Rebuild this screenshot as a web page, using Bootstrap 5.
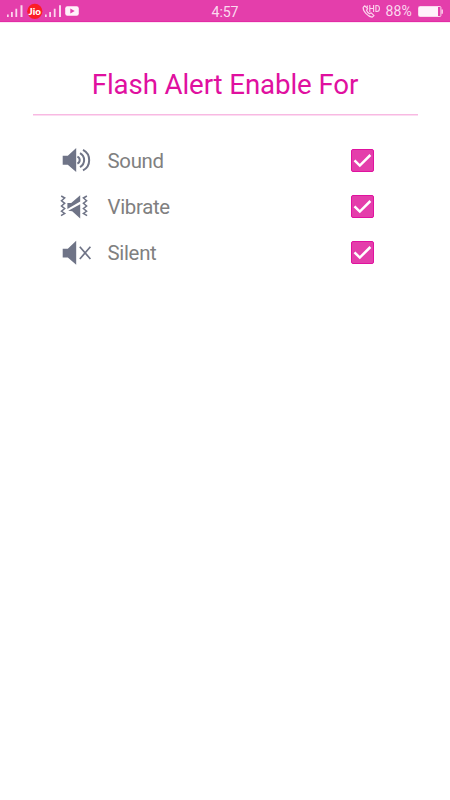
<!DOCTYPE html>
<html lang="en">
<head>
<meta charset="utf-8">
<meta name="viewport" content="width=device-width, initial-scale=1">
<title>Flash Alert</title>
<link href="https://cdn.jsdelivr.net/npm/bootstrap@5.3.0/dist/css/bootstrap.min.css" rel="stylesheet">
<style>
body{font-family:Roboto,"Liberation Sans",sans-serif;background:#fff;overflow:hidden}
.statusbar{height:22px;background:#e43eab;border-bottom:1px solid #e32ba5;color:#fbd9ef;font-size:14px;line-height:22px;box-shadow:0 1px 0 #fce4f4}
.statusbar svg{display:block}
.side{flex:1 1 0}
.clock{font-size:14.2px;padding-top:2px;letter-spacing:-.1px}
.battery-text{font-size:14px;letter-spacing:.2px;margin-right:5px;padding-top:1px}
.panel{margin:0 32px;padding-top:43px}
.title{color:#e0109f;font-size:27.7px;line-height:40px;letter-spacing:-.12px;font-weight:400}
.rule{height:2px;margin:9px 0 0 1px;background:linear-gradient(#f8b9e2 50%,#fcdcf1 50%)}
.options{padding:21px 44px 0 27px}
.option{height:46.4px;color:#808080;font-size:20.4px}
.option .form-check-input{width:23px;height:23px;border-radius:2px;border:1px solid #e0129f}
.option .form-check-input:checked{background-color:#e43eab;border-color:#e0129f;background-image:none}
.option .form-check-input:focus{box-shadow:none}
.box svg{position:absolute;inset:0;pointer-events:none}
.name{margin-left:15.5px;line-height:46px;letter-spacing:-.3px;padding-top:1px}
</style>
<script src="https://cdn.jsdelivr.net/npm/bootstrap@5.3.0/dist/js/bootstrap.bundle.min.js"></script>
</head>
<body>
<header class="statusbar d-flex align-items-center">
  <div class="side">
    <svg width="84" height="22" viewBox="0 0 84 22">
      <g fill="#fbd5ed">
        <path d="M7 14.6h1.7v2.4H7zM11 12h1.8v5H11zM15.4 8.7h1.8V17h-1.8zM20.5 5.3h2V17h-2z"/>
        <path d="M45 14.6h1.7v2.4H45zM49.2 12h1.8v5h-1.8zM53.8 8.7h1.8V17h-1.8zM59 5.3h2V17h-2z"/>
      </g>
      <circle cx="34.8" cy="11.3" r="7.6" fill="#fb1d25"/>
      <text x="34.8" y="15" text-anchor="middle" font-family="Lato,sans-serif" font-weight="900" font-size="9.8" fill="#fff">Jio</text>
      <rect x="65.2" y="6.2" width="13.6" height="9.6" rx="2.2" fill="#fff2fa"/>
      <path d="M70.3 8.4v5.2l4.4-2.6z" fill="#e43eab"/>
    </svg>
  </div>
  <div class="clock">4:57</div>
  <div class="side d-flex justify-content-end align-items-center">
    <svg width="24" height="22" viewBox="361 0 24 22" fill="none" stroke="#fbd5ed">
      <path stroke-width="1.2" stroke-linejoin="round" d="M364.6 5.8l-1.4 1.5c-.5 3.7 4.6 9.4 8.8 9.9l2-1.6-2.8-2.8-1.7 1c-1.5-.9-2.5-2-3-3.5l1.1-1.7zM367.3 5.5v2"/>
      <path stroke-width="1.1" d="M369.8 5v7M373.6 5v7M369.8 8.5h4M375.9 5.5v6h1c3.4 0 3.4-6 0-6z"/>
    </svg>
    <span class="battery-text">88%</span>
    <svg width="33" height="22" viewBox="417 0 33 22">
      <rect x="418.5" y="6.5" width="22.4" height="10" rx="1" fill="none" stroke="#fbd5ed"/>
      <path d="M419 7h19v9h-19z" fill="#fff2fb"/>
      <path d="M441.4 9.4h1.5v4.3h-1.5z" fill="#fbd5ed"/>
    </svg>
  </div>
</header>
<main class="panel">
  <h1 class="title text-center mb-0">Flash Alert Enable For</h1>
  <div class="rule"></div>
  <div class="options">
    <label class="option d-flex align-items-center">
      <svg width="33" height="28" viewBox="59 146.2 33 28" fill="none" stroke="#6f7487">
        <path fill="#6f7487" stroke="none" d="M62.7 156h5.1l8.4-7.7v23.8l-8.4-7.1h-5.1z"/>
        <path stroke-width="2" d="M77.4 156.8a3.8 3.8 0 0 1 0 7M80 153.2a8 8 0 0 1 0 14M83 150.1a11.6 11.6 0 0 1 0 20.5"/>
      </svg>
      <span class="name flex-grow-1">Sound</span>
      <span class="box position-relative d-flex"><input class="form-check-input m-0" type="checkbox" checked><svg width="23" height="23"><path d="M3.5 11.4l5.3 5.2L19.4 6" fill="none" stroke="#fff" stroke-width="2.5"/></svg></span>
    </label>
    <label class="option d-flex align-items-center">
      <svg width="33" height="28" viewBox="59 193 33 28" fill="none" stroke="#6f7487">
        <path fill="#6f7487" stroke="none" d="M67.4 203h3.8l9-7.8v6.4l-12.8 7.5zM68.2 210.8l12-6.6v14.4l-8-7.3z"/>
        <path stroke-width="1.5" d="M61.2 196l3.5 2-3.2 2.8 3.2 2.5-3.2 2.7 3.2 2.6-3.2 2.7 3.2 2.2-3.7 2.2M86.9 196l-3.5 2 3.2 2.8-3.2 2.5 3.2 2.7-3.2 2.6 3.2 2.7-3.2 2.2 3.7 2.2"/>
      </svg>
      <span class="name flex-grow-1">Vibrate</span>
      <span class="box position-relative d-flex"><input class="form-check-input m-0" type="checkbox" checked><svg width="23" height="23"><path d="M3.5 11.4l5.3 5.2L19.4 6" fill="none" stroke="#fff" stroke-width="2.5"/></svg></span>
    </label>
    <label class="option d-flex align-items-center">
      <svg width="33" height="28" viewBox="59 239 33 28" fill="none" stroke="#6f7487">
        <path fill="#6f7487" stroke="none" d="M62.7 248.7h5.1l8.4-7.9v23.9l-8.4-7.2h-5.1z"/>
        <path stroke-width="1.7" d="M79.8 246.8l10.6 12.2M90.4 246.8l-10.6 12.2"/>
      </svg>
      <span class="name flex-grow-1">Silent</span>
      <span class="box position-relative d-flex"><input class="form-check-input m-0" type="checkbox" checked><svg width="23" height="23"><path d="M3.5 11.4l5.3 5.2L19.4 6" fill="none" stroke="#fff" stroke-width="2.5"/></svg></span>
    </label>
  </div>
</main>
</body>
</html>
